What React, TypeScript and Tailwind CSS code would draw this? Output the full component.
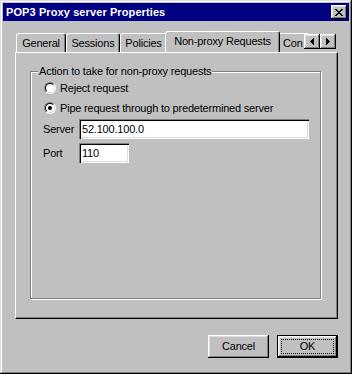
import React from "react";

const raised =
  "shadow-[inset_-1px_-1px_#000,inset_1px_1px_#fff,inset_-2px_-2px_#808080,inset_2px_2px_#dfdfdf]";
const sunken =
  "shadow-[inset_1px_1px_#808080,inset_2px_2px_#000,inset_-1px_-1px_#fff,inset_-2px_-2px_#dfdfdf]";

function Radio({ checked }: { checked?: boolean }) {
  return (
    <div className="w-[12px] h-[12px] shrink-0 rounded-full border border-t-[#808080] border-l-[#808080] border-r-white border-b-white flex">
      <div className="flex-1 rounded-full border border-t-black border-l-black border-r-[#dfdfdf] border-b-[#dfdfdf] bg-white flex items-center justify-center">
        {checked && <div className="w-[4px] h-[4px] rounded-full bg-black" />}
      </div>
    </div>
  );
}

function Tab({ label, w, selected }: { label: string; w: string; selected?: boolean }) {
  return (
    <div
      className={
        "relative shrink-0 flex items-center justify-center border-t border-l border-white rounded-tl-[3px] rounded-tr-[3px] bg-[#c0c0c0] shadow-[inset_-1px_0_#808080] border-r border-r-black whitespace-nowrap " +
        w +
        (selected ? " h-[22px] -ml-[2px] -mr-[2px] -mb-[1px] z-10 pb-[2px]" : " h-[19px]")
      }
    >
      {label}
    </div>
  );
}

export default function App() {
  return (
    <div
      className="w-[352px] h-[374px] bg-[#c0c0c0] p-[3px] flex flex-col text-[11px] tracking-[-0.2px] text-black shadow-[inset_-1px_-1px_#000,inset_1px_1px_#dfdfdf,inset_-2px_-2px_#808080,inset_2px_2px_#fff]"
      style={{ fontFamily: '"Liberation Sans", Arial, sans-serif' }}
    >
      {/* Title bar */}
      <div className="h-[18px] bg-[#000080] flex items-center justify-between pl-[3px] pr-[2px]">
        <span className="text-white font-bold text-[11px] tracking-[0.1px] leading-none">POP3 Proxy server Properties</span>
        <div className={"w-[16px] h-[14px] bg-[#c0c0c0] flex items-center justify-center " + raised}>
          <svg width="8" height="7" viewBox="0 0 8 7" shapeRendering="crispEdges">
            <path
              d="M0 0h2v1H0zM6 0h2v1H6zM1 1h2v1H1zM5 1h2v1H5zM2 2h4v1H2zM3 3h2v1H3zM2 4h4v1H2zM1 5h2v1H1zM5 5h2v1H5zM0 6h2v1H0zM6 6h2v1H6z"
              fill="#000"
            />
          </svg>
        </div>
      </div>

      {/* Tabs + panel */}
      <div className="mt-[10px] ml-[12px] mr-[11px] flex flex-col">
        <div className="relative h-[21px] flex items-end overflow-hidden">
          <div className="w-[1px] shrink-0" />
          <Tab label="General" w="w-[50px]" />
          <Tab label="Sessions" w="w-[54px]" />
          <Tab label="Policies" w="w-[47px]" />
          <Tab label="Non-proxy Requests" w="w-[115px]" selected />
          <div className="h-[19px] w-[30px] shrink-0 overflow-hidden flex items-center border-t border-l border-white rounded-tl-[3px] pl-[4px] whitespace-nowrap">
            Con
          </div>
          <div className="absolute right-[2px] top-[3px] flex z-20">
            <div className={"w-[16px] h-[15px] bg-[#c0c0c0] flex items-center justify-center " + raised}>
              <svg width="4" height="7" viewBox="0 0 4 7" shapeRendering="crispEdges">
                <path d="M3 0h1v7H3zM2 1h1v5H2zM1 2h1v3H1zM0 3h1v1H0z" fill="#000" />
              </svg>
            </div>
            <div className={"w-[16px] h-[15px] bg-[#c0c0c0] flex items-center justify-center " + raised}>
              <svg width="4" height="7" viewBox="0 0 4 7" shapeRendering="crispEdges">
                <path d="M0 0h1v7H0zM1 1h1v5H1zM2 2h1v3H2zM3 3h1v1H3z" fill="#000" />
              </svg>
            </div>
          </div>
        </div>
        <div className="h-[267px] border-t border-l border-white border-r border-b border-r-black border-b-black shadow-[inset_-1px_-1px_#808080] pt-[18px] pl-[14px] pr-[16px] pb-[19px] flex flex-col">
          {/* Group box */}
          <div className="relative flex-1 border border-[#808080] shadow-[1px_1px_0_#fff,inset_1px_1px_0_#fff] pt-[6px] pl-[12px] flex flex-col">
            <div className="absolute -top-[7px] left-[7px] bg-[#c0c0c0] px-[1px] leading-[13px] whitespace-nowrap">
              Action to take for non-proxy requests
            </div>
            <div className="h-[20px] flex items-center gap-[4px] ml-[1px]">
              <Radio />
              <span>Reject request</span>
            </div>
            <div className="h-[20px] flex items-center gap-[4px] ml-[1px]">
              <Radio checked />
              <span>Pipe request through to predetermined server</span>
            </div>
            <div className="mt-[1px] flex items-center">
              <span className="w-[36px]">Server</span>
              <div className={"w-[230px] h-[20px] bg-white flex items-center pl-[3px] " + sunken}>52.100.100.0</div>
            </div>
            <div className="mt-[4px] flex items-center">
              <span className="w-[36px]">Port</span>
              <div className={"w-[50px] h-[20px] bg-white flex items-center pl-[3px] " + sunken}>110</div>
            </div>
          </div>
        </div>
      </div>

      {/* Buttons */}
      <div className="mt-[16px] mr-[11px] flex justify-end gap-[8px]">
        <div className={"w-[61px] h-[23px] bg-[#c0c0c0] flex items-center justify-center " + raised}>Cancel</div>
        <div className="w-[61px] h-[23px] border border-black flex">
          <div className={"flex-1 bg-[#c0c0c0] flex items-center justify-center p-[3px] " + raised}>
            <div className="w-full h-full border border-dotted border-black flex items-center justify-center">OK</div>
          </div>
        </div>
      </div>
    </div>
  );
}
